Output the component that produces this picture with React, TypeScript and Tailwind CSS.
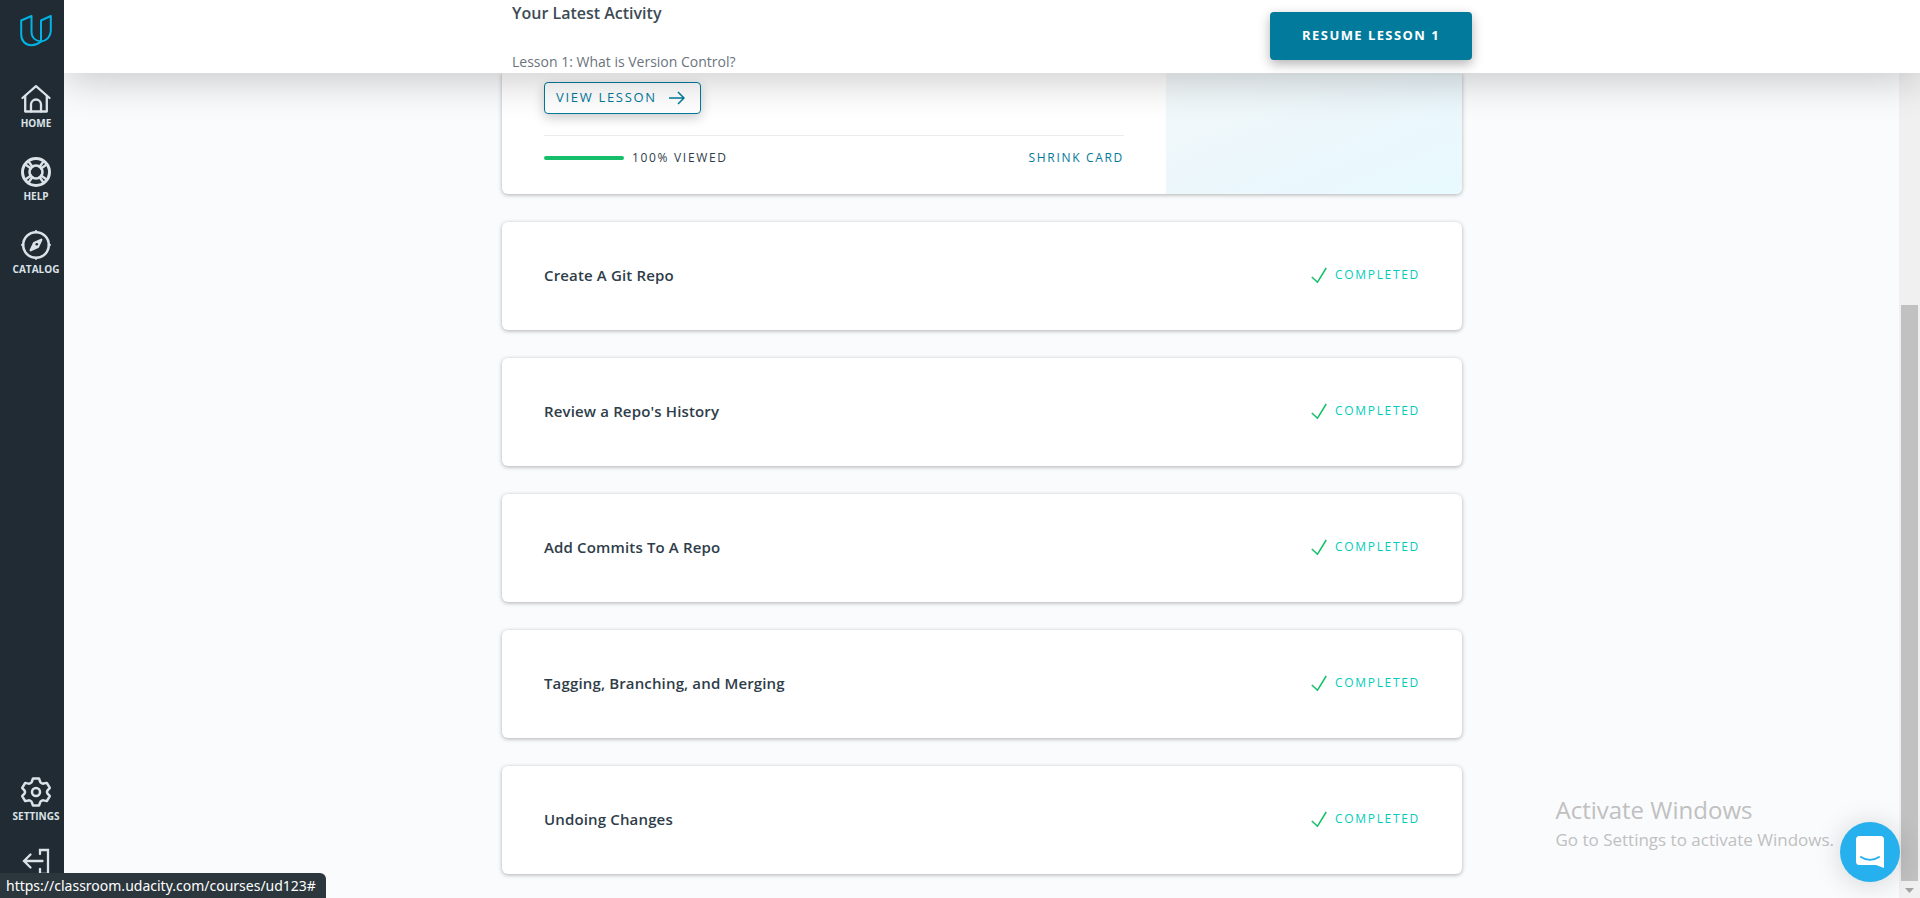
import type { ReactNode } from 'react';

interface NavItemProps {
  label?: string;
  title: string;
  children: ReactNode;
}

const lessons = [
  'Create A Git Repo',
  "Review a Repo's History",
  'Add Commits To A Repo',
  'Tagging, Branching, and Merging',
  'Undoing Changes',
];

function NavItem({ label, title, children }: NavItemProps) {
  return (
    <a
      href="#"
      title={title}
      className="flex h-[73px] flex-col items-center gap-px pl-2 text-[10px] leading-4 font-bold text-[#dbe2e8]"
    >
      <svg
        viewBox="0 0 30 30"
        className="size-[30px] shrink-0 overflow-visible"
        fill="none"
        stroke="currentColor"
        strokeWidth="2.300"
        strokeLinejoin="round"
        strokeLinecap="round"
      >
        {children}
      </svg>
      {label && <span>{label}</span>}
    </a>
  );
}

function Sidebar() {
  return (
    <nav className="relative z-20 flex w-16 shrink-0 flex-col bg-[#202b33]">
      <a href="#" title="Udacity" className="flex h-[84px] justify-center pt-[15px] pl-2">
        <svg viewBox="0 0 32 32" className="size-8" fill="none" stroke="#02b3e4" strokeWidth="2" strokeLinejoin="round">
          <path d="M11.500 1 1.200 5.500V19.500C1.200 26 5.500 30.200 11.500 30.200c3.500 0 6.500-1.200 9.500-3.700-5.500-.5-9.500-4-9.500-9.500z" />
          <path d="M21 26.500V5.500L30.800 1v15c0 5.500-4.300 10-9.800 10.500z" />
        </svg>
      </a>
      <NavItem title="Home" label="HOME">
        <path d="M1.500 14 15 2.200 28.500 14" />
        <path d="M4.200 12v15.500h21.600V12" />
        <path d="M10 27.500v-7a5 5 0 0 1 10 0v7" />
      </NavItem>
      <NavItem title="Help" label="HELP">
        <circle cx="15" cy="15" r="13.500" strokeWidth="3" />
        <circle cx="15" cy="15" r="6.500" strokeWidth="2.600" />
        <path d="m5 8 5 3.500M8 5l3.500 5M25 8l-5 3.500M22 5l-3.500 5M5 22l5-3.500M8 25l3.500-5M25 22l-5-3.500M22 25l-3.500-5" />
      </NavItem>
      <NavItem title="Catalog" label="CATALOG">
        <circle cx="15" cy="15" r="12.800" strokeWidth="2.500" />
        <path d="M15 1.200v1M15 27.800v1M1.200 15h1M27.800 15h1" />
        <path fill="currentColor" d="m20.300 9.700-3.400 7.200-7.200 3.400 3.400-7.200z" />
        <circle cx="15.800" cy="14.200" r="1.300" fill="#202b33" stroke="none" />
      </NavItem>
      <div className="mt-auto h-[121px]">
        <NavItem title="Settings" label="SETTINGS">
          <path
            strokeWidth="2.500"
            d="M12 1.500h6l1.200 3.300c.2.600.6.900 1.100 1.200l.7.400c.5.300 1 .3 1.500.2l3.300-.7 3 5-2.200 2.500c-.4.500-.6 1-.6 1.600s.2 1.100.6 1.600l2.200 2.500-3 5-3.300-.7c-.5-.1-1-.1-1.500.2l-.7.400c-.5.300-.9.600-1.100 1.200L18 28.500h-6l-1.200-3.300c-.2-.6-.6-.9-1.100-1.200L9 23.600c-.5-.3-1-.3-1.500-.2l-3.300.7-3-5 2.200-2.500c.4-.5.6-1 .6-1.600s-.2-1.100-.6-1.600L1.200 10.900l3-5 3.300.7c.5.1 1 .1 1.500-.2l.7-.4c.5-.3.9-.6 1.100-1.200z"
          />
          <circle cx="15" cy="15" r="4" strokeWidth="2.500" />
        </NavItem>
        <NavItem title="Log out">
          <path d="M19 4V0h8v24h-8v-5M21.500 11H3M9.500 4.500 3 11l6.500 6.500" strokeLinejoin="miter" />
        </NavItem>
      </div>
    </nav>
  );
}

function Header() {
  return (
    <header className="relative z-10 h-[73px] shrink-0 bg-white shadow-[0_8px_40px_rgba(0,0,0,0.2)]">
      <div className="mx-auto flex h-full max-w-[960px] items-start justify-between">
        <div className="flex flex-col gap-[27px] pt-px">
          <h2 className="text-base leading-6 font-semibold text-[#3d4b56]">Your Latest Activity</h2>
          <p className="text-sm leading-5 text-[#6b747d]">Lesson 1: What is Version Control?</p>
        </div>
        <button
          type="button"
          className="mt-3 h-12 rounded bg-[#017a9b] px-8 text-[13px] font-bold tracking-[0.11em] text-white shadow-[0_4px_12px_rgba(0,0,0,0.3)]"
        >
          RESUME LESSON 1
        </button>
      </div>
    </header>
  );
}

function CurrentLesson() {
  return (
    <section className="flex rounded-b-md bg-white shadow-[0_1px_4px_rgba(0,0,0,0.3)]">
      <div className="flex-1 px-[42px] pt-[9px] pb-[26px]">
        <button
          type="button"
          className="flex h-8 items-center gap-3 rounded border border-[#017a9b] bg-white px-[11px] text-[13px] font-medium tracking-[0.13em] text-[#017a9b] shadow-[0_4px_12px_rgba(0,0,0,0.2)]"
        >
          VIEW LESSON
          <svg viewBox="0 0 16 14" className="mr-1 h-3.5 w-4" fill="none" stroke="currentColor" strokeWidth="1.500">
            <path d="M0 7h15M9 1l6 6-6 6" />
          </svg>
        </button>
        <div className="mt-[21px] flex items-center justify-between border-t border-[#ebebeb] pt-3 text-xs leading-5 font-medium tracking-[0.14em]">
          <div className="flex items-center gap-2 text-[#2e3d49]">
            <div className="h-1 w-20 rounded-full bg-[#15be69]" />
            100% VIEWED
          </div>
          <button type="button" className="tracking-[0.14em] text-[#017a9b]">
            SHRINK CARD
          </button>
        </div>
      </div>
      <div className="w-[296px] rounded-br-md bg-linear-to-br from-[#f3f8fa] via-[#ecf7fb] to-[#e8faff]" />
    </section>
  );
}

function LessonCard({ title }: { title: string }) {
  return (
    <article className="flex h-[108px] items-center justify-between rounded-md bg-white px-[42px] pb-0.5 shadow-[0_1px_4px_rgba(0,0,0,0.3)]">
      <h3 className="text-[15px] leading-6 font-semibold tracking-[0.01em] text-[#2e3d49]">{title}</h3>
      <div className="flex items-center gap-2 text-xs leading-5 font-medium tracking-[0.14em] text-[#02ccba]">
        <svg viewBox="0 0 16 16" className="size-4" fill="none" stroke="#15be69" strokeWidth="1.500">
          <path d="m.8 10 5.700 5.200L15.200 1" />
        </svg>
        COMPLETED
      </div>
    </article>
  );
}

function Scrollbar() {
  return (
    <div className="flex w-[21px] flex-col items-center justify-end bg-[#f0f0f0]">
      <div className="h-[576px] w-[17px] bg-[#c1c1c1]" />
      <svg viewBox="0 0 17 17" className="size-[17px]" fill="#a3a3a3">
        <path d="M4 7h9l-4.500 5z" />
      </svg>
    </div>
  );
}

export default function App() {
  return (
    <div className="relative flex h-screen overflow-hidden bg-[#fafbfd] font-['Open_Sans',sans-serif]">
      <Sidebar />
      <div className="flex min-w-0 flex-1 flex-col">
        <Header />
        <div className="flex min-h-0 flex-1">
          <main className="flex-1 pl-px">
            <div className="mx-auto flex max-w-[960px] flex-col gap-7">
              <CurrentLesson />
              {lessons.map((title) => (
                <LessonCard key={title} title={title} />
              ))}
            </div>
          </main>
          <Scrollbar />
        </div>
      </div>

      {/* Desktop watermark */}
      <div className="absolute right-[86px] bottom-[46px] flex flex-col gap-0.5 text-[#c0c0c0]">
        <p className="text-2xl leading-8">Activate Windows</p>
        <p className="text-[17px] leading-6">Go to Settings to activate Windows.</p>
      </div>

      {/* Chat launcher */}
      <button
        type="button"
        aria-label="Open chat"
        className="absolute right-5 bottom-4 z-20 flex size-[60px] items-center justify-center rounded-full bg-[#27b0ee] shadow-[0_2px_28px_rgba(0,0,0,0.16)]"
      >
        <svg viewBox="0 0 28 32" className="h-8 w-7">
          <path fill="#fff" d="M3.500 0h21A3.500 3.500 0 0 1 28 3.500V32l-8-3H3.500A3.500 3.500 0 0 1 0 25.500v-22A3.500 3.500 0 0 1 3.500 0z" />
          <path d="M5 21c5.500 3.800 12.500 3.800 18 0" fill="none" stroke="#27b0ee" strokeWidth="2" strokeLinecap="round" />
        </svg>
      </button>

      {/* Link status */}
      <div className="absolute bottom-0 left-0 z-30 rounded-tr-md bg-[#2b363d] pr-2.5 pl-1.5 font-['Noto_Sans',sans-serif] text-sm leading-[25px] text-white">
        https://classroom.udacity.com/courses/ud123#
      </div>
    </div>
  );
}
